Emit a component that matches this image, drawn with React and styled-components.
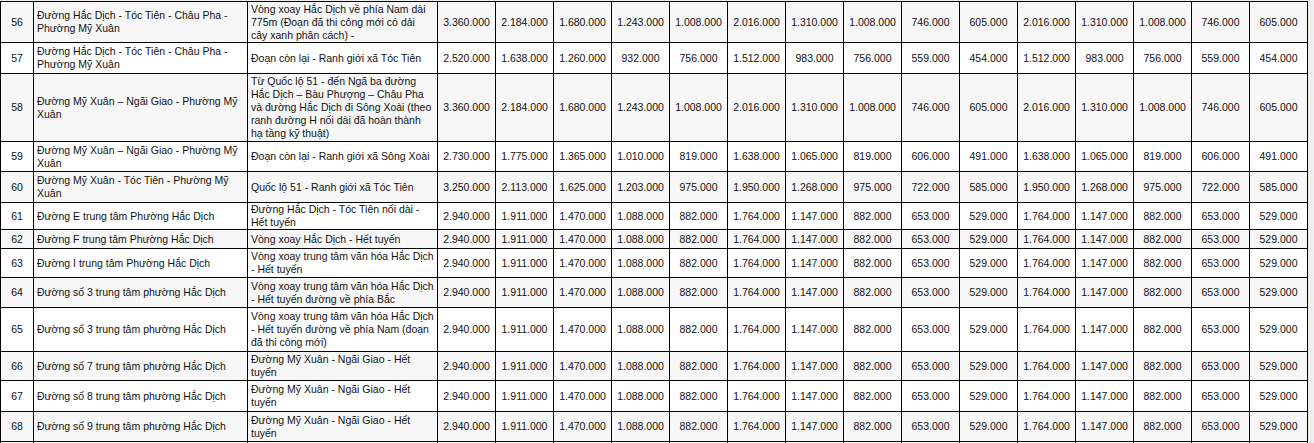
import styled, { createGlobalStyle } from 'styled-components';

const GlobalStyle = createGlobalStyle`
  html, body {
    margin: 0;
    padding: 0;
    background: #efefef;
  }
  body {
    font-family: "Liberation Sans", Arial, sans-serif;
  }
`;

const Page = styled.div`
  padding-top: 1px;
  overflow: hidden;
  height: 442px;
`;

const Table = styled.table`
  border-collapse: collapse;
  table-layout: fixed;
  width: 1307px;
  font-size: 10.5px;
  line-height: 13px;
  color: #111;
`;

const Row = styled.tr`
  height: ${({ $h }) => $h}px;
  background: ${({ $shaded }) => ($shaded ? '#f7f7f7' : '#ffffff')};
`;

const Cell = styled.td`
  border: 1px solid #000;
  padding: 0 3px;
  vertical-align: middle;
  text-align: ${({ $align }) => $align || 'left'};
  word-wrap: break-word;
`;

const NUM_COLS = 15;

const priceA = ['3.360.000', '2.184.000', '1.680.000', '1.243.000', '1.008.000', '2.016.000', '1.310.000', '1.008.000', '746.000', '605.000', '2.016.000', '1.310.000', '1.008.000', '746.000', '605.000'];
const priceB = ['2.520.000', '1.638.000', '1.260.000', '932.000', '756.000', '1.512.000', '983.000', '756.000', '559.000', '454.000', '1.512.000', '983.000', '756.000', '559.000', '454.000'];
const priceC = ['2.730.000', '1.775.000', '1.365.000', '1.010.000', '819.000', '1.638.000', '1.065.000', '819.000', '606.000', '491.000', '1.638.000', '1.065.000', '819.000', '606.000', '491.000'];
const priceD = ['3.250.000', '2.113.000', '1.625.000', '1.203.000', '975.000', '1.950.000', '1.268.000', '975.000', '722.000', '585.000', '1.950.000', '1.268.000', '975.000', '722.000', '585.000'];
const priceE = ['2.940.000', '1.911.000', '1.470.000', '1.088.000', '882.000', '1.764.000', '1.147.000', '882.000', '653.000', '529.000', '1.764.000', '1.147.000', '882.000', '653.000', '529.000'];

// h = row height as it sits in the source page
const rows = [
  { no: 56, h: 41, name: 'Đường Hắc Dịch - Tóc Tiên - Châu Pha - Phường Mỹ Xuân', seg: 'Vòng xoay Hắc Dịch về phía Nam dài 775m (Đoạn đã thi công mới có dải cây xanh phân cách) -', prices: priceA },
  { no: 57, h: 31, name: 'Đường Hắc Dịch - Tóc Tiên - Châu Pha - Phường Mỹ Xuân', seg: 'Đoạn còn lại - Ranh giới xã Tóc Tiên', prices: priceB },
  { no: 58, h: 68, name: 'Đường Mỹ Xuân – Ngãi Giao - Phường Mỹ Xuân', seg: 'Từ Quốc lộ 51 - đến Ngã ba đường Hắc Dịch – Bàu Phượng – Châu Pha và đường Hắc Dịch đi Sông Xoài (theo ranh đường H nối dài đã hoàn thành hạ tầng kỹ thuật)', prices: priceA },
  { no: 59, h: 30, name: 'Đường Mỹ Xuân – Ngãi Giao - Phường Mỹ Xuân', seg: 'Đoạn còn lại - Ranh giới xã Sông Xoài', prices: priceC },
  { no: 60, h: 31, name: 'Đường Mỹ Xuân - Tóc Tiên - Phường Mỹ Xuân', seg: 'Quốc lộ 51 - Ranh giới xã Tóc Tiên', prices: priceD },
  { no: 61, h: 27, name: 'Đường E trung tâm Phường Hắc Dịch', seg: 'Đường Hắc Dịch - Tóc Tiên nối dài - Hết tuyến', prices: priceE },
  { no: 62, h: 19, name: 'Đường F trung tâm Phường Hắc Dịch', seg: 'Vòng xoay Hắc Dịch - Hết tuyến', prices: priceE },
  { no: 63, h: 29, name: 'Đường I trung tâm Phường Hắc Dịch', seg: 'Vòng xoay trung tâm văn hóa Hắc Dịch - Hết tuyến', prices: priceE },
  { no: 64, h: 30, name: 'Đường số 3 trung tâm phường Hắc Dịch', seg: 'Vòng xoay trung tâm văn hóa Hắc Dịch - Hết tuyến đường về phía Bắc', prices: priceE },
  { no: 65, h: 44, name: 'Đường số 3 trung tâm phường Hắc Dịch', seg: 'Vòng xoay trung tâm văn hóa Hắc Dịch - Hết tuyến đường về phía Nam (đoạn đã thi công mới)', prices: priceE },
  { no: 66, h: 29, name: 'Đường số 7 trung tâm phường Hắc Dịch', seg: 'Đường Mỹ Xuân - Ngãi Giao - Hết tuyến', prices: priceE },
  { no: 67, h: 31, name: 'Đường số 8 trung tâm phường Hắc Dịch', seg: 'Đường Mỹ Xuân - Ngãi Giao - Hết tuyến', prices: priceE },
  { no: 68, h: 30, name: 'Đường số 9 trung tâm phường Hắc Dịch', seg: 'Đường Mỹ Xuân - Ngãi Giao - Hết tuyến', prices: priceE },
];

export default function App() {
  return (
    <Page>
      <GlobalStyle />
      <Table>
        <colgroup>
          <col style={{ width: 33 }} />
          <col style={{ width: 214 }} />
          <col style={{ width: 190 }} />
          {Array.from({ length: NUM_COLS }, (_, i) => (
            <col key={i} style={{ width: 58 }} />
          ))}
        </colgroup>
        <tbody>
          {rows.map((r) => (
            <Row key={r.no} $h={r.h} $shaded={r.no % 2 === 0}>
              <Cell $align="center">{r.no}</Cell>
              <Cell>{r.name}</Cell>
              <Cell>{r.seg}</Cell>
              {r.prices.map((p, i) => (
                <Cell key={i} $align="center">{p}</Cell>
              ))}
            </Row>
          ))}
          <Row $h={30}>
            <Cell $align="center">&nbsp;</Cell>
            <Cell>&nbsp;</Cell>
            <Cell>&nbsp;</Cell>
            {priceE.map((_, i) => (
              <Cell key={i}>&nbsp;</Cell>
            ))}
          </Row>
        </tbody>
      </Table>
    </Page>
  );
}
